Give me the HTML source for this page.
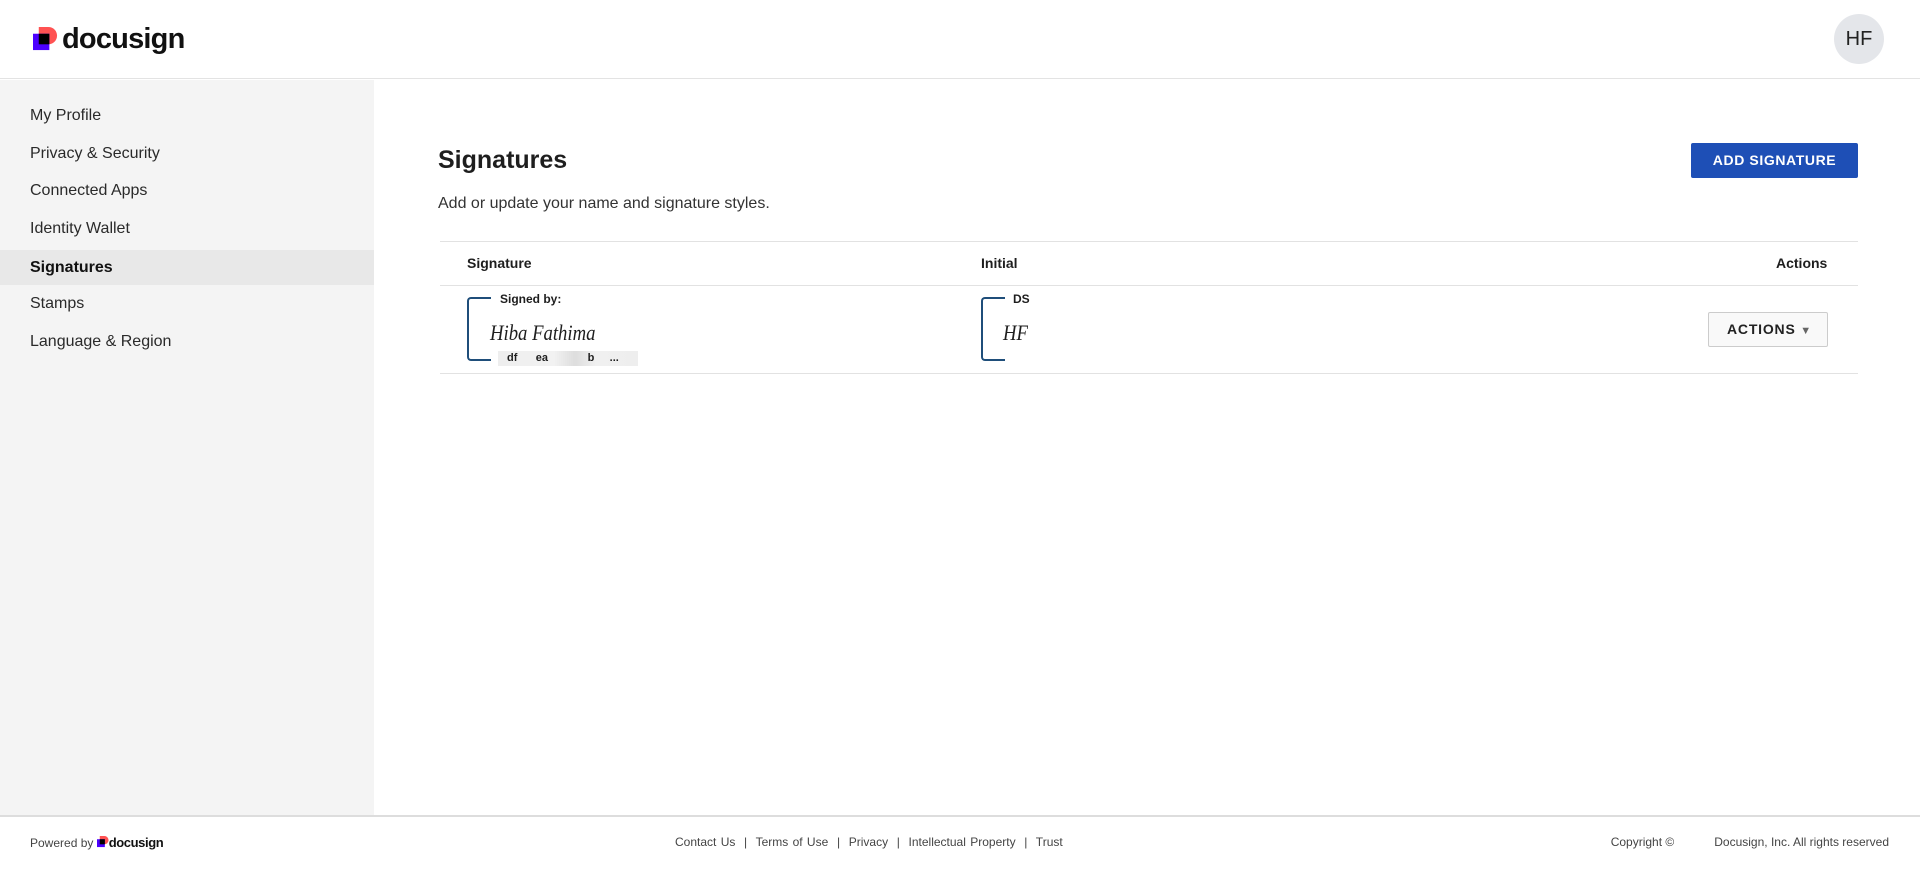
<!DOCTYPE html>
<html><head><meta charset="utf-8"><style>
*{margin:0;padding:0;box-sizing:border-box}
body{width:1920px;height:869px;font-family:"Liberation Sans",sans-serif;color:#1e1e1e;background:#fff;position:relative;overflow:hidden}
.abs{position:absolute}
.hdr{left:0;top:0;width:1920px;height:79px;border-bottom:1px solid #e3e3e3}
.side{left:0;top:80px;width:374px;height:735px;background:#f4f4f4}
.nav{position:absolute;left:0;width:374px;height:36px;line-height:36px;padding-left:30px;font-size:16px;color:#2a2a2a}
.nav.on{background:#e8e8e8;font-weight:bold;color:#111}
.line{background:#e2e2e2;height:1px}
.brk{border:2px solid #1f4e7a;border-right:none;border-radius:4px 0 0 4px;width:24px}
.foot{font-size:12px;color:#444}
</style></head><body>
<div class="abs hdr"></div>
<svg class="abs" style="left:33px;top:27px" width="25" height="25" viewBox="0 0 26 26"><path d="M6 0h10a9 9 0 0 1 0 18H6z" fill="#ff5252"/><rect x="0" y="7" width="17" height="17" fill="#4c00ff"/><rect x="6" y="7" width="11" height="11" fill="#000"/></svg>
<div class="abs" style="left:62px;top:23px;font-size:29px;font-weight:bold;letter-spacing:-0.8px;color:#111">docusign</div>
<div class="abs" style="left:1834px;top:14px;width:50px;height:50px;border-radius:50%;background:#e4e6ea;text-align:center;line-height:50px;font-size:20px;color:#222">HF</div>
<div class="abs side">
<div class="nav" style="top:18px">My Profile</div>
<div class="nav" style="top:56px">Privacy &amp; Security</div>
<div class="nav" style="top:93px">Connected Apps</div>
<div class="nav" style="top:131px">Identity Wallet</div>
<div class="nav on" style="top:170px;height:35px;line-height:35px">Signatures</div>
<div class="nav" style="top:206px">Stamps</div>
<div class="nav" style="top:244px">Language &amp; Region</div>
</div>
<div class="abs" style="left:438px;top:146px;font-size:25px;font-weight:bold;color:#1e1e1e">Signatures</div>
<div class="abs" style="left:438px;top:195px;font-size:16px;color:#333">Add or update your name and signature styles.</div>
<div class="abs" style="left:1691px;top:143px;width:167px;height:35px;background:#1e4fb6;border-radius:2px;color:#fff;font-weight:bold;font-size:14px;letter-spacing:.6px;text-align:center;line-height:35px">ADD SIGNATURE</div>
<div class="abs line" style="left:440px;top:241px;width:1418px"></div>
<div class="abs" style="left:467px;top:255px;font-size:14px;font-weight:bold">Signature</div>
<div class="abs" style="left:981px;top:255px;font-size:14px;font-weight:bold">Initial</div>
<div class="abs" style="left:1776px;top:255px;font-size:14px;font-weight:bold">Actions</div>
<div class="abs line" style="left:440px;top:285px;width:1418px"></div>
<div class="abs brk" style="left:467px;top:297px;height:64px"></div>
<div class="abs" style="left:498px;top:292px;font-size:12px;font-weight:bold;background:#fff;padding:0 2px">Signed by:</div>
<div class="abs" style="left:490px;top:320px;font-size:22px;font-family:'Liberation Serif',serif;font-style:italic;transform:scaleX(.85);transform-origin:left">Hiba Fathima</div>
<div class="abs" style="left:498px;top:351px;width:140px;height:15px;background:linear-gradient(90deg,#eee,#f2f2f2 40%,#ddd 55%,#f0f0f0 70%,#eee);font-size:11px;font-weight:bold;line-height:15px;padding-left:9px">df&nbsp;&nbsp;&nbsp;&nbsp;&nbsp;&nbsp;ea&nbsp;&nbsp;&nbsp;&nbsp;&nbsp;&nbsp;&nbsp;&nbsp;&nbsp;&nbsp;&nbsp;&nbsp;&nbsp;b&nbsp;&nbsp;&nbsp;&nbsp;&nbsp;...</div>
<div class="abs brk" style="left:981px;top:297px;height:64px"></div>
<div class="abs" style="left:1010px;top:292px;font-size:12px;font-weight:bold;background:#fff;padding:0 3px">DS</div>
<div class="abs" style="left:1003px;top:320px;font-size:22px;font-family:'Liberation Serif',serif;font-style:italic;transform:scaleX(.85);transform-origin:left">HF</div>
<div class="abs" style="left:1708px;top:312px;width:120px;height:35px;border:1px solid #ccc;border-radius:2px;background:#f9f9f9;font-size:14px;font-weight:bold;letter-spacing:.8px;line-height:33px;padding-left:18px;color:#222">ACTIONS <span style="color:#666;font-size:11px">▼</span></div>
<div class="abs line" style="left:440px;top:373px;width:1418px"></div>
<div class="abs" style="left:0;top:815px;width:1920px;height:2px;background:#ddd"></div>
<div class="abs foot" style="left:30px;top:835px">Powered by <svg width="12" height="12" viewBox="0 0 26 26" style="vertical-align:-1px"><path d="M6 0h10a9 9 0 0 1 0 18H6z" fill="#ff5252"/><rect x="0" y="7" width="17" height="17" fill="#4c00ff"/><rect x="6" y="7" width="11" height="11" fill="#000"/></svg><b style="color:#111;font-size:13px;letter-spacing:-.4px">docusign</b></div>
<div class="abs foot" style="left:675px;top:835px;word-spacing:1px">Contact Us &nbsp;|&nbsp; Terms of Use &nbsp;|&nbsp; Privacy &nbsp;|&nbsp; Intellectual Property &nbsp;|&nbsp; Trust</div>
<div class="abs foot" style="right:31px;top:835px">Copyright ©&nbsp;&nbsp;&nbsp;&nbsp;&nbsp;&nbsp;&nbsp;&nbsp;&nbsp;&nbsp;&nbsp; Docusign, Inc. All rights reserved</div>
</body></html>
